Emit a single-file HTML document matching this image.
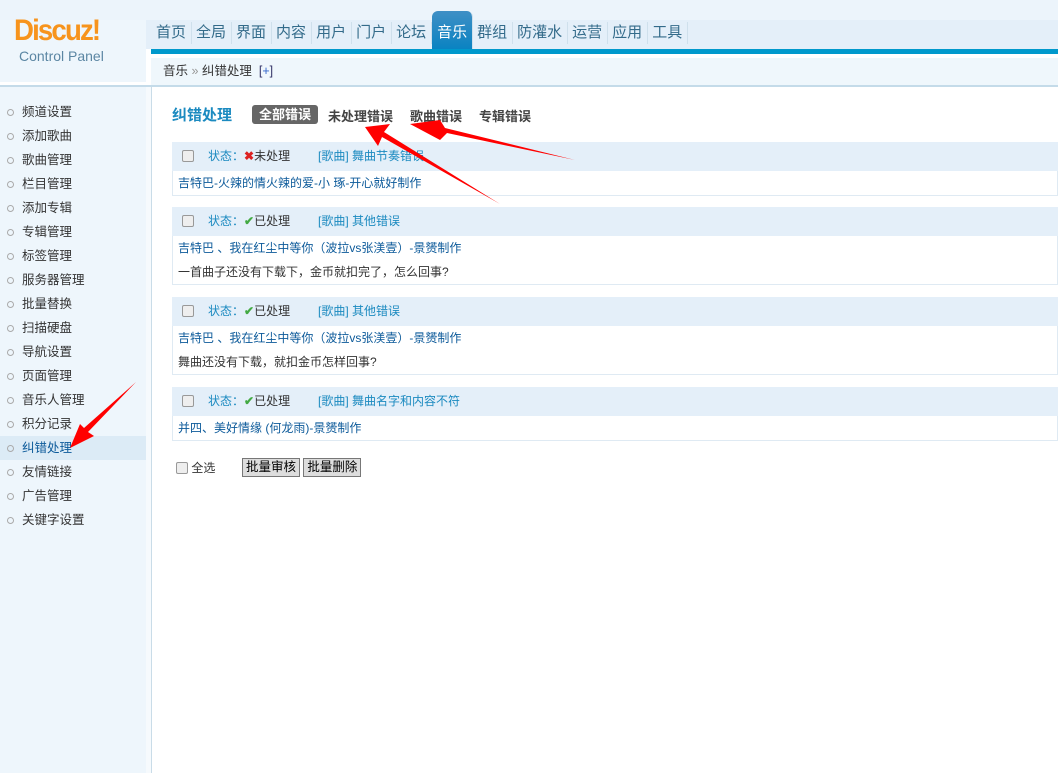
<!DOCTYPE html>
<html><head><meta charset="utf-8"><style>
*{margin:0;padding:0;box-sizing:border-box}
body{width:1058px;height:773px;overflow:hidden;background:#fff;font:12px "Liberation Sans","Noto Sans CJK SC",sans-serif;color:#333;position:relative}
.a{position:absolute}
a{color:#0c5a9a;text-decoration:none}
.nav span{display:inline-block;font-size:15px;color:#336b8a;padding:0 5px 0 4px;border-right:1px solid #cfe0ec;line-height:22px}
.side div{height:24px;line-height:24px;padding-left:22px;font-size:12.5px;color:#333;position:relative}
.side div:before{content:"";position:absolute;left:7px;top:9px;width:5px;height:5px;border:1px solid #aaa;border-radius:50%}
.hd{position:absolute;left:172px;width:886px;height:29px;background:#e4eff9;line-height:29px}
.bd{position:absolute;left:172px;width:886px;border:1px solid #dfeaf3;border-top:none;background:#fff}
.bd p{height:24px;line-height:24px;padding-left:5px}
.cb{position:absolute;left:10px;top:8px;width:12px;height:12px;border:1px solid #999;border-radius:2px;background:#eee}
.st{position:absolute;left:36px;color:#1b8ac0}
.ty{position:absolute;left:146px;color:#1b8ac0}
.btn{display:inline-block;border:1px solid #777;background:#ddd;padding:0 3px;height:19px;line-height:17px;font-size:12.5px;color:#000}
.f{position:absolute;top:106px;font-weight:bold;font-size:13px;color:#444}
</style></head><body>
<div class="a" style="left:0;top:0;width:1058px;height:20px;background:#ecf4fb"></div>
<div class="a" style="left:0;top:20px;width:1058px;height:29px;background:#e4eff9"></div>
<div class="a" style="left:0;top:20px;width:146px;height:62px;background:#eef6fc"></div>
<div class="a" style="left:14px;top:14px;font:bold 30px 'Liberation Sans',sans-serif;color:#f7941d;letter-spacing:-2px;transform:scaleX(0.92);transform-origin:left">Discuz!</div>
<div class="a" style="left:19px;top:48px;font-size:14px;color:#5b86a3">Control Panel</div>
<div class="a nav" style="left:152px;top:22px"><span>首页</span><span>全局</span><span>界面</span><span>内容</span><span>用户</span><span>门户</span><span>论坛</span><span style="background:linear-gradient(#3f8fc5,#0a83c2);color:#fff;border-radius:6px 6px 0 0;padding:0 5px;height:38px;margin-top:-11px;line-height:44px;vertical-align:top">音乐</span><span>群组</span><span>防灌水</span><span>运营</span><span>应用</span><span>工具</span></div>
<div class="a" style="left:151px;top:49px;width:907px;height:5px;background:#0099cc"></div>
<div class="a" style="left:151px;top:58px;width:907px;height:27px;background:#eff7fc;line-height:27px;padding-left:12px;color:#333;font-size:12.5px">音乐 <span style="color:#999">»</span> 纠错处理 &nbsp;<span style="color:#336">[<span style="color:#36c">+</span>]</span></div>
<div class="a" style="left:0;top:85px;width:1058px;height:2px;background:#c4dbe9"></div>
<div class="a" style="left:0;top:87px;width:146px;height:686px;background:#eef6fc"></div>
<div class="a" style="left:146px;top:87px;width:6px;height:686px;background:#f6fafd;border-right:1px solid #c9dce8"></div>
<div class="a side" style="left:0;top:100px;width:146px">
<div>频道设置</div><div>添加歌曲</div><div>歌曲管理</div><div>栏目管理</div><div>添加专辑</div><div>专辑管理</div><div>标签管理</div><div>服务器管理</div><div>批量替换</div><div>扫描硬盘</div><div>导航设置</div><div>页面管理</div><div>音乐人管理</div><div>积分记录</div><div style="background:#dcebf6;color:#0c5a9a">纠错处理</div><div>友情链接</div><div>广告管理</div><div>关键字设置</div></div>
<div class="a" style="left:172px;top:104px;font-size:15px;font-weight:bold;color:#1b8ac0">纠错处理</div>
<div class="a" style="left:252px;top:105px;width:66px;height:19px;background:#666;border-radius:3px;color:#fff;font-weight:bold;font-size:13px;text-align:center;line-height:19px">全部错误</div>
<div class="f" style="left:328px">未处理错误</div>
<div class="f" style="left:410px">歌曲错误</div>
<div class="f" style="left:479px">专辑错误</div>

<div class="hd" style="top:142px"><i class="cb"></i><span class="st">状态：<b style="color:#d22">✖</b><span style="color:#333">未处理</span></span><span class="ty">[歌曲] 舞曲节奏错误</span></div>
<div class="bd" style="top:171px"><p><a>吉特巴-火辣的情火辣的爱-小 琢-开心就好制作</a></p></div>
<div class="hd" style="top:207px"><i class="cb"></i><span class="st">状态：<b style="color:#4a4">✔</b><span style="color:#333">已处理</span></span><span class="ty">[歌曲] 其他错误</span></div>
<div class="bd" style="top:236px"><p><a>吉特巴 、我在红尘中等你（波拉vs张渼壹）-景赟制作</a></p><p>一首曲子还没有下载下，金币就扣完了，怎么回事?</p></div>
<div class="hd" style="top:297px"><i class="cb"></i><span class="st">状态：<b style="color:#4a4">✔</b><span style="color:#333">已处理</span></span><span class="ty">[歌曲] 其他错误</span></div>
<div class="bd" style="top:326px"><p><a>吉特巴 、我在红尘中等你（波拉vs张渼壹）-景赟制作</a></p><p>舞曲还没有下载，就扣金币怎样回事?</p></div>
<div class="hd" style="top:387px"><i class="cb"></i><span class="st">状态：<b style="color:#4a4">✔</b><span style="color:#333">已处理</span></span><span class="ty">[歌曲] 舞曲名字和内容不符</span></div>
<div class="bd" style="top:416px"><p><a>并四、美好情缘 (何龙雨)-景赟制作</a></p></div>
<div class="a" style="left:176px;top:459px"><i class="cb" style="position:static;display:inline-block;vertical-align:-2px"></i> 全选</div>
<div class="a" style="left:242px;top:458px"><span class="btn">批量审核</span> <span class="btn">批量删除</span></div>
<svg class="a" style="left:0;top:0" width="1058" height="773">
<g fill="#f00">
<polygon points="575,160 445,128 440,120 410,124 440,140 447,133"/>
<polygon points="500,204 384,132 390,124 365,127 378,146 382,137"/>
<polygon points="136,382 88,432 94,436 70,448 80,424 84,428"/>
</g></svg>
</body></html>
